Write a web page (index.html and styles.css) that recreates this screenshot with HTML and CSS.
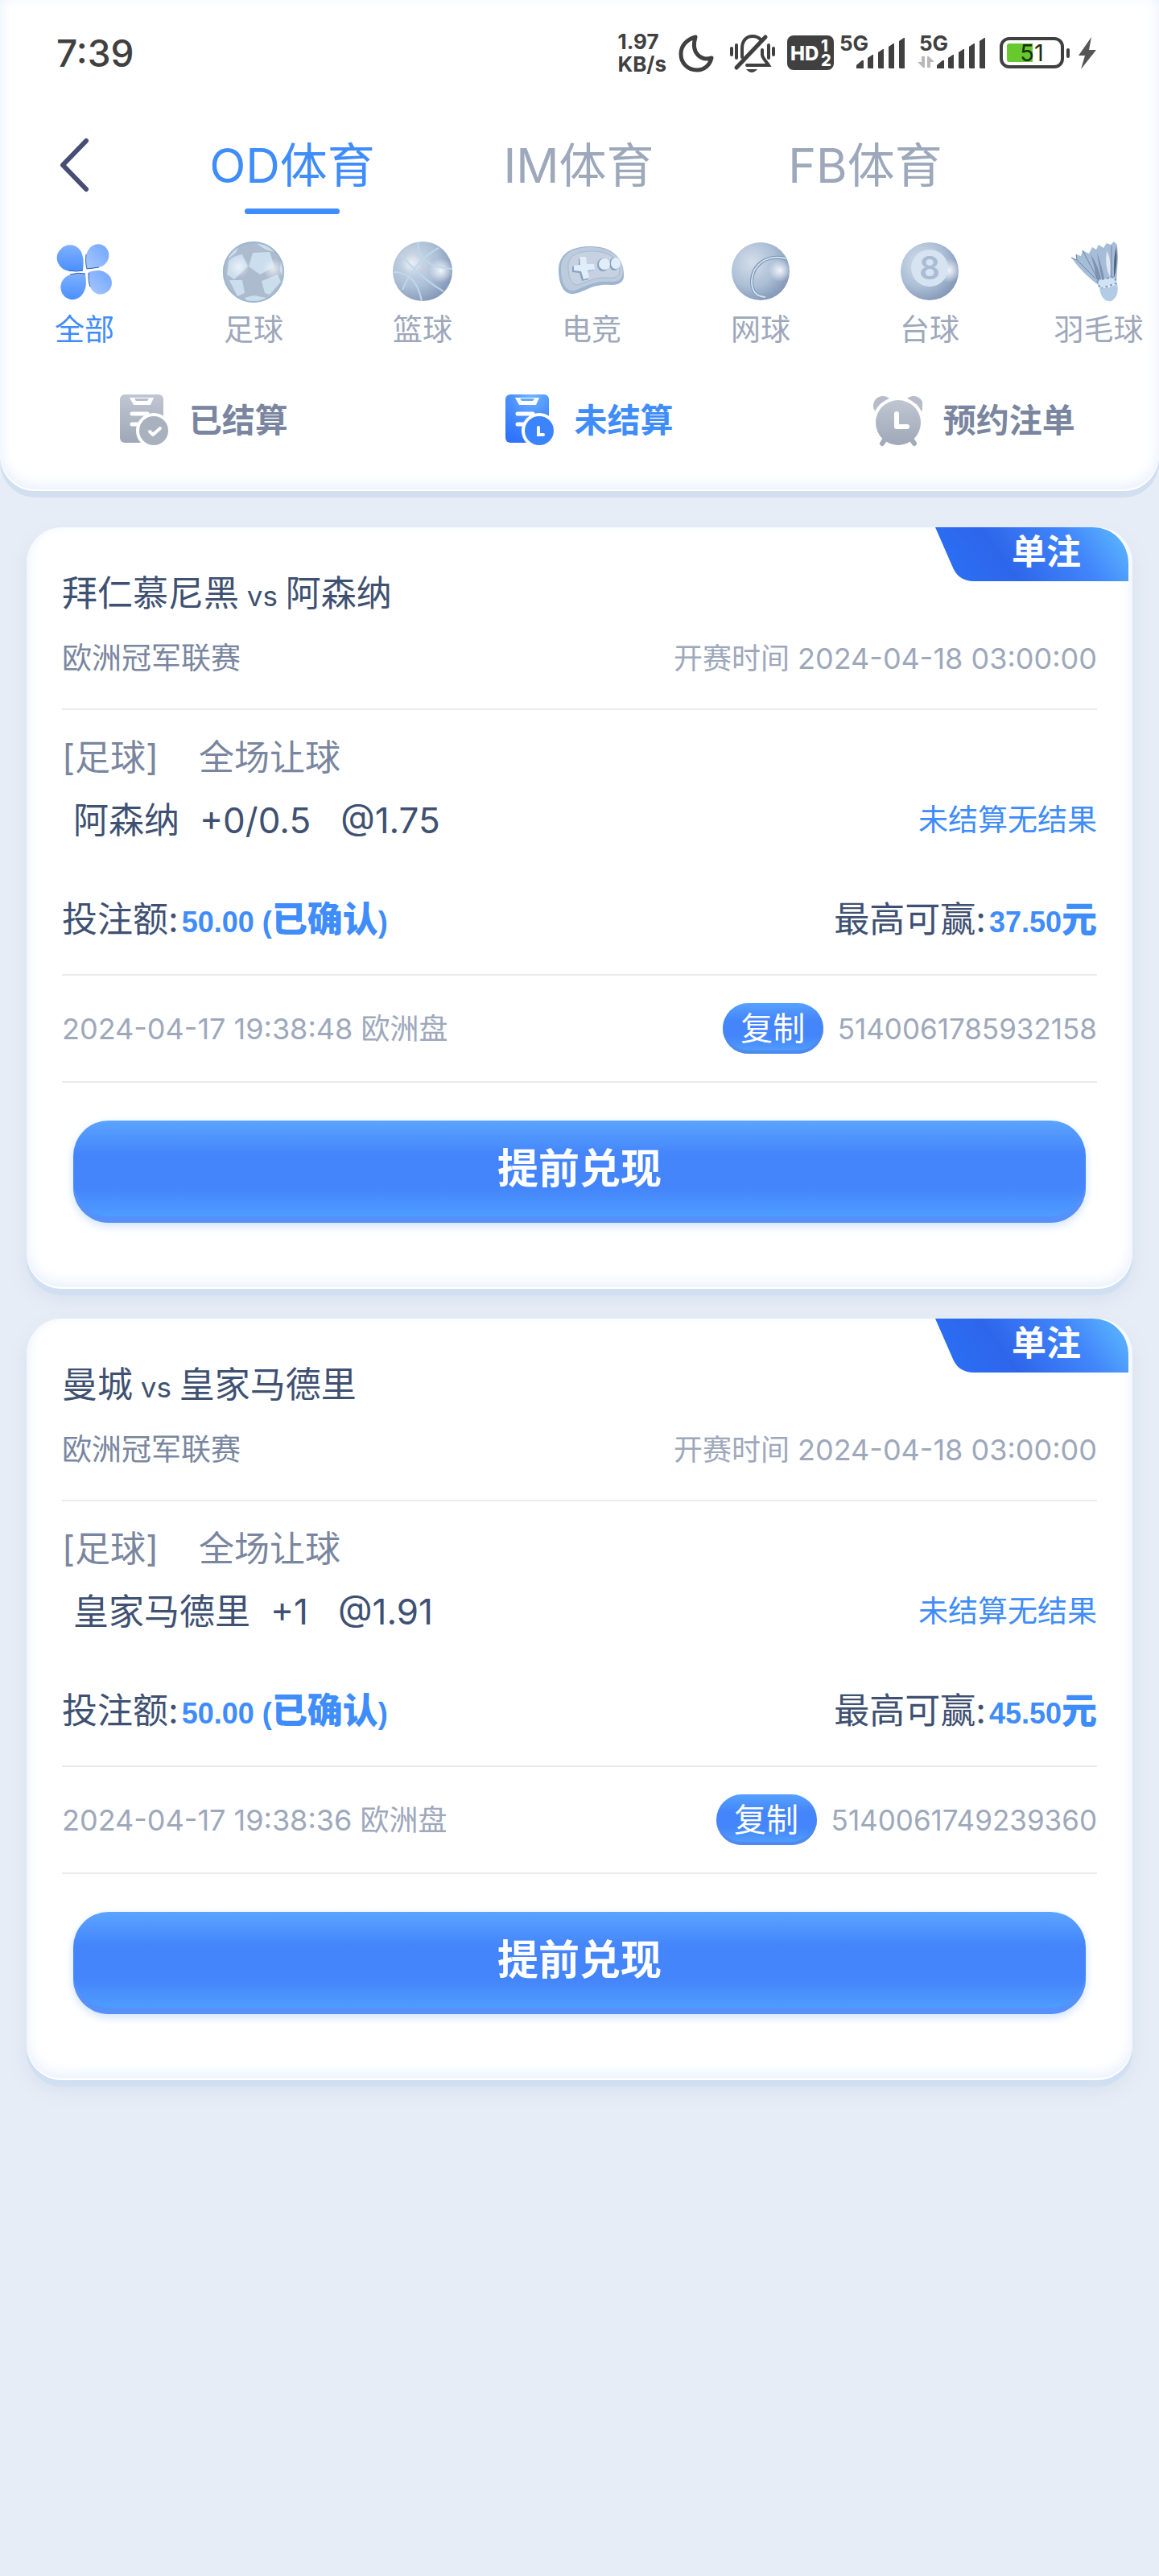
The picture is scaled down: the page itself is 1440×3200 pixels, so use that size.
FILE: index.html
```html
<!DOCTYPE html>
<html lang="zh-CN">
  <head>
    <meta charset="UTF-8" />
    <meta name="viewport" content="width=device-width, initial-scale=1.0" />
    <title>投注记录</title>
    <link rel="stylesheet" href="styles.css">
  </head>
  <body>
    <header class="header">
      <div class="status-bar">
        <span class="clock">7:39</span>
        <div class="status-icons">
          <div class="net-speed">1.97<br>KB/s</div>
          <!-- moon -->
          <svg width="48" height="56" viewBox="0 0 48 56" fill="none" stroke="#404040" stroke-width="5" stroke-linejoin="round">
            <path d="M22 8 C11 11 4 19 4 29 C4 41 13 49 24 49 C33 49 40 43 42 34 C29 38 16 28 22 8 Z" />
          </svg>
          <!-- muted bell -->
          <svg width="72" height="56" viewBox="0 0 72 56" fill="none" stroke="#404040" stroke-width="4" stroke-linecap="round">
            <path d="M24 33 V22 C24 13 29 7 37 7 C41 7 44 8 47 11" />
            <path d="M49 24 V30 C49 34 54 38 57 43 H30" />
            <path d="M17 46 L53 8" stroke-width="5" />
            <path d="M11 22 V30 M17 18 V34 M57 18 V34 M63 22 V30" />
            <path d="M29 48 H43 Q36 56 29 48 Z" fill="#404040" stroke="none" />
          </svg>
          <!-- HD -->
          <svg width="58" height="56" viewBox="0 0 58 56">
            <rect x="0" y="6" width="58" height="43" rx="8" fill="#404040" />
            <text x="4" y="37" class="hd-text">HD</text>
            <text x="42" y="26" class="hd-num">1</text>
            <text x="42" y="44" class="hd-num">2</text>
          </svg>
          <!-- signal -->
          <svg width="88" height="56" viewBox="0 0 88 56" fill="#404040">
            <text x="-1" y="25" class="net-type">5G</text>
            <path d="M20 47 V43 L27 37 H29 V47 Z" />
            <path d="M34 46 V34 L40 30 H41 V47 H35 Z" />
            <path d="M47 46 V27 L53 23 H54 V47 H48 Z" />
            <path d="M60 46 V20 L66 16 H67 V47 H61 Z" />
            <path d="M73 46 V13 L79 9 H80 V47 H74 Z" />
          </svg>
          <svg width="92" height="56" viewBox="0 0 92 56" fill="#404040">
            <text x="2" y="25" class="net-type">5G</text>
            <path d="M5 32 H9 V46 H7 L0 39 H5 Z M12 32 H14 L20 38 V39 H16 V46 H12 Z" fill="#b9b9b9" />
            <path d="M24 47 V43 L31 37 H33 V47 Z" />
            <path d="M38 46 V34 L44 30 H45 V47 H39 Z" />
            <path d="M51 46 V27 L57 23 H58 V47 H52 Z" />
            <path d="M64 46 V20 L70 16 H71 V47 H65 Z" />
            <path d="M77 46 V13 L83 9 H84 V47 H78 Z" />
          </svg>
          <!-- battery -->
          <svg width="122" height="56" viewBox="0 0 122 56">
            <rect x="4" y="10" width="76" height="35" rx="10" fill="none" stroke="#404040" stroke-width="4" />
            <path d="M14 16 H43 V39 H14 Q11 39 11 36 V19 Q11 16 14 16 Z" fill="#66c92d" />
            <rect x="85" y="22" width="4" height="12" rx="2" fill="#404040" />
            <text x="42" y="38" class="battery-text">51</text>
            <path d="M116 8 L100 31 H108 L103 48 L122 24 H113 Z" fill="#555" />
          </svg>
        </div>
      </div>

      <nav class="tabs">
        <button class="back" aria-label="返回">
          <svg width="44" height="72" viewBox="0 0 44 72" fill="none" stroke="#474d74" stroke-width="6" stroke-linecap="round" stroke-linejoin="round">
            <path d="M37 6 L8 36 L37 66" />
          </svg>
        </button>
        <a href="#" class="tab active">OD体育</a>
        <a href="#" class="tab">IM体育</a>
        <a href="#" class="tab">FB体育</a>
      </nav>

      <nav class="sports">
        <a href="#" class="sport active">
          <svg width="84" height="84" viewBox="0 0 84 84">
            <defs>
              <linearGradient id="petal" x1="0" y1="0" x2="0" y2="1">
                <stop offset="0" stop-color="#7fb0ff" />
                <stop offset="1" stop-color="#4a90ff" />
              </linearGradient>
              <linearGradient id="petalLight" x1="1" y1="0" x2="0" y2="1">
                <stop offset="0" stop-color="#6fa5ff" />
                <stop offset="1" stop-color="#a9c8ff" />
              </linearGradient>
            </defs>
            <path d="M40 40 C41 30 41 24 38 17 C33 7 19 5 12 14 C4 22 8 34 17 39 C24 42 32 41 40 40 Z" fill="url(#petal)" />
            <path d="M45 38 C43 30 43 24 45 18 C49 7 61 4 68 11 C76 19 72 31 63 35 C57 37 52 38 45 38 Z" fill="url(#petalLight)" />
            <path d="M43 44 C44 54 45 60 41 67 C36 77 24 79 17 72 C9 63 12 51 22 46 C29 43 36 43 43 44 Z" fill="url(#petal)" />
            <path d="M47 42 C55 40 61 39 67 42 C77 47 79 59 71 66 C63 73 52 69 49 60 C47 54 47 49 47 42 Z" fill="url(#petalLight)" />
            <path d="M44 20 C43 28 44 34 45 38 L60 36 M47 43 C47 50 47 55 49 60 M22 40 Q32 42 40 40 M24 45 Q34 42 43 44" fill="none" stroke="#2c5db5" stroke-width="1" />
          </svg>
          <span>全部</span>
        </a>
        <a href="#" class="sport">
          <svg width="84" height="84" viewBox="0 0 84 84">
            <defs>
              <radialGradient id="ball" cx="0.35" cy="0.35" r="0.75">
                <stop offset="0" stop-color="#d5deea" />
                <stop offset="0.55" stop-color="#acbfd6" />
                <stop offset="1" stop-color="#7d92b3" />
              </radialGradient>
              <radialGradient id="shine">
                <stop offset="0" stop-color="#f3f5fa" />
                <stop offset="1" stop-color="#f3f5fa" stop-opacity="0" />
              </radialGradient>
              <clipPath id="soccerClip"><circle cx="42" cy="42" r="38" /></clipPath>
            </defs>
            <circle cx="42" cy="42" r="38" fill="#adbbcf" />
            <g clip-path="url(#soccerClip)" fill="#cbdeed">
              <path d="M11 28 Q18 21 28 20 L35 35 L18 51 L9 45 Z" />
              <path d="M41 18 L62 17 L68 35 L50 45 L36 35 Z" />
              <path d="M12 52 L28 52 L31 68 L22 72 Z" />
              <path d="M52 53 L72 45 L76 54 L62 70 L56 68 Z" />
              <path d="M45 6 L60 8 L68 17 L57 14 Z" />
              <path d="M13 18 L24 9 L20 18 L10 26 Z" />
              <path d="M31 74 L42 71 L58 74 L50 82 H36 Z" />
              <path d="M76 28 L82 38 L80 54 L75 40 Z" />
            </g>
            <circle cx="42" cy="42" r="37" fill="none" stroke="#9fb7cf" stroke-width="2" />
            <circle cx="24" cy="36" r="13" fill="url(#shine)" opacity="0.8" />
            <circle cx="66" cy="38" r="13" fill="url(#shine)" opacity="0.8" />
          </svg>
          <span>足球</span>
        </a>
        <a href="#" class="sport">
          <svg width="84" height="84" viewBox="0 0 84 84">
            <circle cx="42" cy="41" r="37" fill="url(#ball)" />
            <circle cx="65" cy="40" r="15" fill="url(#shine)" />
            <circle cx="28" cy="32" r="13" fill="url(#shine)" opacity="0.7" />
            <g fill="none" stroke="#bcd8ea" stroke-width="2">
              <path d="M15 20 Q40 50 68 66" />
              <path d="M62 12 Q32 28 17 64" />
              <path d="M36 5 Q36 36 79 38" />
              <path d="M6 42 Q34 42 41 78" />
            </g>
          </svg>
          <span>篮球</span>
        </a>
        <a href="#" class="sport">
          <svg width="84" height="84" viewBox="0 0 84 84">
            <path d="M1 42 C0 18 18 10 42 10 C68 10 82 26 82 44 C83 55 76 58 66 58 C42 56 34 67 20 69 C6 70 2 56 1 42 Z" fill="#9fb4ce" />
            <path d="M4 38 C4 18 20 11 42 11 C68 12 81 26 81 41 C81 52 75 54 66 54 C44 52 34 61 20 65 C8 66 4 52 4 38 Z" fill="#bccbdd" />
            <path d="M13 36 C12 22 24 16 43 16 C66 16 77 28 77 39 C77 48 71 50 62 49 C44 48 34 56 24 58 C16 58 13 46 13 36 Z" fill="#c6d1e1" stroke="#a9b9ce" stroke-width="1" />
            <path d="M26 25 L34 24 L35 33 L44 33 L45 40 L36 41 L38 51 L30 53 L27 43 L18 42 L18 35 L26 34 Z" fill="#8aa2c2" />
            <path d="M27 23 L35 23 L36 32 L45 32 L46 39 L37 40 L39 49 L32 51 L29 41 L20 40 L20 34 L28 33 Z" fill="#e1eefa" />
            <ellipse cx="56" cy="33" rx="7" ry="8" fill="#8aa2c2" />
            <ellipse cx="70" cy="32" rx="6" ry="8" fill="#8aa2c2" />
            <ellipse cx="58" cy="32" rx="7" ry="7" fill="#e1eefa" />
            <ellipse cx="72" cy="31" rx="6" ry="7" fill="#e1eefa" />
          </svg>
          <span>电竞</span>
        </a>
        <a href="#" class="sport">
          <svg width="84" height="84" viewBox="0 0 84 84">
            <circle cx="42" cy="41" r="36" fill="url(#ball)" />
            <circle cx="66" cy="40" r="14" fill="url(#shine)" />
            <path d="M73 25 C50 20 32 32 31 53 C31 66 36 72 48 73" fill="none" stroke="#7d93b2" stroke-width="4" />
            <path d="M73 25 C50 20 32 32 31 53 C31 66 36 72 48 73" fill="none" stroke="#cbe1f2" stroke-width="2" />
          </svg>
          <span>网球</span>
        </a>
        <a href="#" class="sport">
          <svg width="84" height="84" viewBox="0 0 84 84">
            <circle cx="42" cy="41" r="36" fill="url(#ball)" />
            <circle cx="66" cy="40" r="15" fill="url(#shine)" />
            <circle cx="42" cy="37" r="23" fill="#d6e3f0" />
            <text x="42" y="51" class="ball-number">8</text>
          </svg>
          <span>台球</span>
        </a>
        <a href="#" class="sport">
          <svg width="84" height="84" viewBox="0 0 84 84">
            <path d="M8 24 L15 27 L14 20 L20 22 L22 15 L30 19 L34 11 L39 14 L42 8 L48 12 L52 6 L57 8 L61 4 L65 8 L66 24 L64 56 L44 60 Q22 44 8 24 Z" fill="#a6bdd8" />
            <path d="M32 20 Q42 34 46 54 L39 50 Q37 34 32 20 Z M40 18 Q46 34 50 54 L46 50 Q42 32 40 18 Z" fill="#7c92b1" />
            <path d="M52 16 Q58 24 56 48 Q49 34 52 16 Z" fill="#e4e8ee" />
            <path d="M64 10 Q66 34 61 50 Q60 24 64 10 Z" fill="#54657e" />
            <path d="M8 24 L15 27 L14 20 M22 15 Q34 38 42 52 M15 27 L38 50 M58 9 L58 48" fill="none" stroke="#6f86a6" stroke-width="1" />
            <path d="M40 52 L62 48 L64 56 L44 63 Z" fill="#cfe3f5" stroke="#7e99bb" stroke-width="2" stroke-dasharray="3 3" />
            <path d="M43 62 Q54 63 65 56 Q68 72 58 78 Q46 80 43 62 Z" fill="#b2cce6" />
          </svg>
          <span>羽毛球</span>
        </a>
      </nav>

      <div class="filters">
        <a href="#" class="filter">
          <svg width="80" height="80" viewBox="0 0 80 80">
            <defs>
              <linearGradient id="grayIcon" x1="0" y1="0" x2="0" y2="1">
                <stop offset="0" stop-color="#c0c6d1" />
                <stop offset="1" stop-color="#9fa8b8" />
              </linearGradient>
            </defs>
            <rect x="20" y="8" width="54" height="60" rx="6" fill="url(#grayIcon)" />
            <path d="M32 12 H62 L58 21 H37 Z" fill="#fff" />
            <path d="M38 13 H56 L54 16 H40 Z" fill="#b7becb" />
            <path d="M35 32 H54 M35 45 H44" stroke="#fff" stroke-width="5" stroke-linecap="round" />
            <circle cx="62" cy="53" r="22" fill="#fff" />
            <circle cx="62" cy="53" r="18" fill="#a9b1bf" />
            <path d="M57 54 L61 58 L70 50" fill="none" stroke="#fff" stroke-width="4" stroke-linecap="round" stroke-linejoin="round" />
          </svg>
          <span>已结算</span>
        </a>
        <a href="#" class="filter active">
          <svg width="80" height="80" viewBox="0 0 80 80">
            <defs>
              <radialGradient id="blueIcon" cx="0.6" cy="0" r="1">
                <stop offset="0" stop-color="#6fb6ff" />
                <stop offset="0.5" stop-color="#4a8fff" />
                <stop offset="1" stop-color="#2f73fc" />
              </radialGradient>
            </defs>
            <rect x="20" y="8" width="54" height="60" rx="6" fill="url(#blueIcon)" />
            <path d="M32 12 H62 L58 21 H37 Z" fill="#fff" />
            <path d="M38 13 H56 L54 16 H40 Z" fill="#62aaff" />
            <path d="M35 32 H54 M35 45 H44" stroke="#fff" stroke-width="5" stroke-linecap="round" />
            <circle cx="62" cy="53" r="22" fill="#fff" />
            <circle cx="62" cy="53" r="18" fill="#3b84fd" />
            <path d="M61 49 V58 H67" fill="none" stroke="#fff" stroke-width="4" stroke-linecap="round" />
          </svg>
          <span>未结算</span>
        </a>
        <a href="#" class="filter">
          <svg width="80" height="80" viewBox="0 0 80 80">
            <circle cx="31" cy="22" r="12" fill="#b6bdc9" />
            <circle cx="69" cy="22" r="12" fill="#b6bdc9" />
            <circle cx="50" cy="43" r="32" fill="#fff" />
            <path d="M36 60 L30 69 M64 60 L70 69" stroke="#a3abba" stroke-width="6" stroke-linecap="round" />
            <circle cx="50" cy="43" r="28" fill="url(#grayIcon)" />
            <path d="M48 32 V48 H61" fill="none" stroke="#fff" stroke-width="6" stroke-linecap="round" stroke-linejoin="round" />
          </svg>
          <span>预约注单</span>
        </a>
      </div>
    </header>

    <main class="bets">
      <article class="card">
        <div class="ribbon">
          <svg width="240" height="67" viewBox="0 0 240 67">
            <defs>
              <linearGradient id="ribbonFill" x1="0" y1="0.4" x2="1" y2="0.2">
                <stop offset="0" stop-color="#2a6ef5" />
                <stop offset="0.3" stop-color="#2e66ea" />
                <stop offset="0.7" stop-color="#4186fb" />
                <stop offset="1" stop-color="#5cb6ff" />
              </linearGradient>
            </defs>
            <path d="M0 0 H196 A44 44 0 0 1 240 44 V67 H48 Q28 67 21 48 Z" fill="url(#ribbonFill)" />
          </svg>
          <span>单注</span>
        </div>
        <section class="match">
          <h2>拜仁慕尼黑<small> vs </small>阿森纳</h2>
          <div class="row">
            <span class="league">欧洲冠军联赛</span>
            <span class="muted">开赛时间 2024-04-18 03:00:00</span>
          </div>
        </section>
        <section class="bet">
          <div class="play"><span>[足球]</span><span>全场让球</span></div>
          <div class="row pick">
            <div class="odds"><span>阿森纳</span><span>+0/0.5</span><span class="price">@1.75</span></div>
            <span class="result">未结算无结果</span>
          </div>
          <div class="row money">
            <div>投注额:<b>50.00 (<span>已确认</span>)</b></div>
            <div>最高可赢:<b>37.50<span>元</span></b></div>
          </div>
        </section>
        <section class="order muted">
          <span>2024-04-17 19:38:48 欧洲盘</span>
          <div class="order-no">
            <button class="copy">复制</button>
            <span>5140061785932158</span>
          </div>
        </section>
        <button class="cashout">提前兑现</button>
      </article>

      <article class="card">
        <div class="ribbon">
          <svg width="240" height="67" viewBox="0 0 240 67">
            <path d="M0 0 H196 A44 44 0 0 1 240 44 V67 H48 Q28 67 21 48 Z" fill="url(#ribbonFill)" />
          </svg>
          <span>单注</span>
        </div>
        <section class="match">
          <h2>曼城<small> vs </small>皇家马德里</h2>
          <div class="row">
            <span class="league">欧洲冠军联赛</span>
            <span class="muted">开赛时间 2024-04-18 03:00:00</span>
          </div>
        </section>
        <section class="bet">
          <div class="play"><span>[足球]</span><span>全场让球</span></div>
          <div class="row pick">
            <div class="odds"><span>皇家马德里</span><span>+1</span><span class="price">@1.91</span></div>
            <span class="result">未结算无结果</span>
          </div>
          <div class="row money">
            <div>投注额:<b>50.00 (<span>已确认</span>)</b></div>
            <div>最高可赢:<b>45.50<span>元</span></b></div>
          </div>
        </section>
        <section class="order muted">
          <span>2024-04-17 19:38:36 欧洲盘</span>
          <div class="order-no">
            <button class="copy">复制</button>
            <span>5140061749239360</span>
          </div>
        </section>
        <button class="cashout">提前兑现</button>
      </article>
    </main>
  </body>
</html>
```
FILE: styles.css
```css
* {
  box-sizing: border-box;
}

body {
  margin: 0;
  background-color: #e6edf6;
  font-family: Inter, "Noto Sans CJK SC", sans-serif;
  font-size: 37px;
  color: #3f5172;
}

a {
  color: inherit;
  text-decoration: none;
}

button {
  border: none;
  padding: 0;
  background: none;
  font-family: inherit;
  cursor: pointer;
}

svg {
  display: block;
  flex: none;
}

/* header */
.header {
  padding-bottom: 48px;
  background-color: #fff;
  border-radius: 0 0 44px 44px;
  box-shadow: 0 8px 0 #d1dff1, inset 0 -2px 1px #fff, inset 0 -6px 18px #e6eefc;
}

.status-bar {
  display: flex;
  justify-content: space-between;
  align-items: center;
  height: 132px;
  padding: 0 78px 0 70px;
  color: #404040;
}

.clock {
  font-size: 46px;
  font-weight: 500;
}

.status-icons {
  display: flex;
  align-items: center;
  gap: 8px;
}

.net-speed {
  padding-right: 6px;
  font-size: 26px;
  font-weight: 700;
  line-height: 28px;
}

.hd-text {
  font-size: 24px;
  font-weight: 800;
  fill: #fff;
}

.hd-num {
  font-size: 20px;
  font-weight: 800;
  fill: #fff;
}

.net-type {
  font-size: 26px;
  font-weight: 700;
}

.battery-text {
  font-size: 29px;
  font-weight: 400;
  fill: #1d2b12;
  text-anchor: middle;
}

.tabs {
  display: flex;
  height: 146px;
  padding-right: 187px;
}

.back {
  display: flex;
  flex: none;
  align-items: center;
  width: 185px;
  padding-left: 70px;
}

.tab {
  position: relative;
  flex: 1;
  font-size: 59px;
  line-height: 148px;
  text-align: center;
  color: #9ea8bb;
}

.tab.active {
  color: #3f8cfb;
}

.tab.active::after {
  content: "";
  position: absolute;
  bottom: 12px;
  left: 50%;
  width: 118px;
  height: 7px;
  margin-left: -59px;
  border-radius: 4px;
  background-color: #3f8cff;
}

.sports {
  display: flex;
  margin-top: 18px;
  overflow: hidden;
}

.sport {
  display: flex;
  flex: 0 0 210px;
  flex-direction: column;
  align-items: center;
  gap: 8px;
  line-height: 44px;
  color: #9ea8bb;
}

.sport.active,
.filter.active {
  color: #3f8cfb;
}

.ball-number {
  font-size: 40px;
  font-weight: 600;
  fill: #a9bcd3;
  text-anchor: middle;
}

.filters {
  display: flex;
  margin-top: 50px;
  padding-left: 4px;
}

.filter {
  display: flex;
  flex: 1;
  justify-content: center;
  align-items: center;
  gap: 26px;
  font-size: 41px;
  font-weight: 600;
  line-height: 60px;
  color: #7a869f;
}

/* bet list */
.bets {
  padding: 45px 33px;
}

.card {
  position: relative;
  margin-bottom: 37px;
  padding: 52px 44px 82px;
  background-color: #fff;
  border-radius: 44px;
  box-shadow: 0 8px 0 #d0dff1, 0 12px 24px #d6dfee, inset 0 -2px 1px #fff, inset 0 -6px 18px #e6eefc;
}

.ribbon {
  position: absolute;
  top: 0;
  right: 5px;
  color: #fff;
  font-size: 43px;
  font-weight: 600;
  line-height: 60px;
}

.ribbon span {
  position: absolute;
  top: 0;
  right: 59px;
}

.row {
  display: flex;
  justify-content: space-between;
  align-items: center;
}

.match {
  padding-bottom: 37px;
  border-bottom: 2px solid #ebebee;
  line-height: 50px;
}

.match h2 {
  margin: 0 0 26px;
  font-size: 44px;
  font-weight: 400;
  line-height: 60px;
}

.match small {
  font-size: 35px;
  line-height: 1;
}

.league {
  color: #7a869f;
}

.muted {
  font-size: 36px;
  color: #9ea8bb;
}

.bet {
  padding: 29px 0 38px;
  border-bottom: 2px solid #ebebee;
  font-size: 44px;
  line-height: 60px;
}

.play {
  display: flex;
  gap: 50px;
  margin-bottom: 18px;
  color: #7a869f;
}

.pick {
  margin-bottom: 63px;
}

.odds {
  display: flex;
  gap: 25px;
  padding-left: 14px;
}

.price {
  margin-left: 12px;
}

.result {
  font-size: 37px;
  color: #3f8cfb;
}

.money b {
  margin-left: 4px;
  font-family: "Liberation Sans", "Noto Sans CJK SC", sans-serif;
  font-size: 36px;
  font-weight: 700;
  line-height: 1;
  color: #3f8cfb;
}

.money b span {
  font-size: 44px;
  font-weight: 900;
}

.order {
  display: flex;
  justify-content: space-between;
  align-items: center;
  height: 133px;
  border-bottom: 2px solid #ebebee;
  line-height: 50px;
}

.order-no {
  display: flex;
  align-items: center;
  gap: 18px;
  font-size: 35px;
}

.copy {
  width: 125px;
  height: 63px;
  border-radius: 32px;
  background: linear-gradient(#57a1ff, #4485fb 35%, #4485fb 65%, #4f9bfd 92%);
  box-shadow: inset 0 -4px 0 #5089ee;
  font-size: 40px;
  line-height: 60px;
  color: #fff;
}

.cashout {
  display: block;
  width: calc(100% - 28px);
  height: 127px;
  margin: 47px 14px 0;
  padding-bottom: 8px;
  border-radius: 44px;
  background: linear-gradient(#5ba4ff, #4485fb 33%, #4485fb 66%, #4e9dff 94%);
  box-shadow: inset 0 -8px 0 #5690fb, 0 4px 12px #cfe2fa;
  font-size: 51px;
  font-weight: 600;
  line-height: 60px;
  color: #fff;
}
```
